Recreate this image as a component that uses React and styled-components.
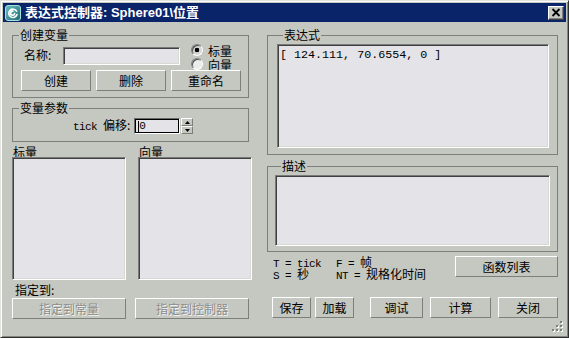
import React from 'react';
import styled, { createGlobalStyle } from 'styled-components';

const BG = '#c5c7c1';
const FIELD = '#e4e3e7';
const CJK = '"Noto Sans CJK SC", "Liberation Sans", sans-serif';

const Global = createGlobalStyle`
  html, body { margin: 0; padding: 0; background: ${BG}; }
  body { font-family: ${CJK}; font-size: 12px; color: #000; }
  * { box-sizing: border-box; }
`;

const Window = styled.div`
  position: relative;
  width: 569px;
  height: 338px;
  background: ${BG};
  border: 1px solid;
  border-color: #e2e3df #303030 #303030 #e2e3df;
  box-shadow: inset 1px 1px #ffffff, inset -1px -1px #85877f;
  padding: 2px;
  display: flex;
  flex-direction: column;
`;

const TitleBar = styled.div`
  height: 19px;
  background: #0a246a;
  display: flex;
  align-items: center;
  padding: 0 2px;
`;

const Title = styled.div`
  margin-left: 4px;
  flex: 1;
  color: #fff;
  font-family: "Liberation Sans", "Noto Sans CJK SC", sans-serif;
  font-weight: bold;
  font-size: 13px;
  line-height: 19px;
  white-space: nowrap;
`;

const CloseBtn = styled.div`
  width: 16px;
  height: 14px;
  background: ${BG};
  border: 1px solid;
  border-color: #fff #404040 #404040 #fff;
  box-shadow: inset -1px -1px #808080;
  display: flex;
  align-items: center;
  justify-content: center;
`;

const Body = styled.div`
  flex: 1;
  display: flex;
  padding: 7px 8px 0 9px;
  gap: 15px;
`;

const Column = styled.div`
  width: ${(p) => p.$w}px;
  display: flex;
  flex-direction: column;
`;

const Group = styled.fieldset`
  margin: ${(p) => p.$mt || 0}px 0 0 0;
  width: ${(p) => p.$w}px;
  min-width: 0;
  border: 1px solid #7d7f7a;
  padding: ${(p) => p.$pt}px 0 ${(p) => p.$pb}px ${(p) => p.$pl || 0}px;
`;

const Legend = styled.legend`
  margin-left: 6px;
  padding: 0 1px;
  font-size: 12px;
  line-height: 12px;
  height: 12px;
`;

const NameRow = styled.div`
  display: flex;
  align-items: flex-start;
  height: 27px;
  padding-left: 11px;
`;

const FieldLabel = styled.span`
  width: 39px;
  margin-top: 5px;
  line-height: 14px;
`;

const Sunken = styled.div`
  width: ${(p) => p.$w}px;
  height: ${(p) => p.$h}px;
  margin-top: ${(p) => p.$mt || 0}px;
  background: ${FIELD};
  border: 1px solid;
  border-color: #7a7a7a #ffffff #ffffff #7a7a7a;
  box-shadow: inset 1px 1px #404040, inset -1px -1px #d8d9d4;
`;

const RadioList = styled.div`
  margin-left: 11px;
  display: flex;
  flex-direction: column;
`;

const RadioItem = styled.label`
  display: flex;
  align-items: center;
  gap: 5px;
  height: 14px;
`;

const RadioText = styled.span`
  display: block;
  height: 13px;
  line-height: 13px;
  font-size: 12px;
`;

const Radio = styled.span`
  width: 12px;
  height: 12px;
  border-radius: 50%;
  border: 1px solid;
  border-color: #808080 #ffffff #ffffff #808080;
  background: ${(p) =>
    p.$checked
      ? 'radial-gradient(circle at center, #000 0 2px, #d6d6d6 2.6px)'
      : '#ececec'};
  box-shadow: inset 1px 1px #505050;
`;

const BtnRow = styled.div`
  display: flex;
  gap: ${(p) => p.$gap || 0}px;
  padding-left: ${(p) => p.$pl || 0}px;
  margin-top: ${(p) => p.$mt || 0}px;
`;

const Btn = styled.div`
  width: ${(p) => p.$w}px;
  height: 21px;
  margin-left: ${(p) => p.$ml || 0}px;
  background: ${BG};
  border: 1px solid;
  border-color: #ffffff #7d7f7a #7d7f7a #ffffff;
  display: flex;
  align-items: center;
  justify-content: center;
  font-size: 12px;
  line-height: 12px;
  color: ${(p) => (p.$disabled ? '#8c8e89' : '#000')};
  text-shadow: ${(p) => (p.$disabled ? '1px 1px 0 #f2f2f2' : 'none')};
`;

const TickRow = styled.div`
  display: flex;
  align-items: center;
  padding-left: 60px;
  height: 16px;
`;

const Mono = styled.span`
  font-family: "Liberation Mono", monospace;
  font-size: 11px;
  letter-spacing: -0.6px;
`;

const TickLabel = styled.span`
  margin-right: 4px;
  line-height: 14px;
  white-space: pre;
`;

const SpinInput = styled.div`
  width: 46px;
  height: 16px;
  background: ${FIELD};
  border: 1px solid;
  border-color: #6a6a6a #ffffff #ffffff #6a6a6a;
  box-shadow: inset 1px 1px #000, inset -1px -1px #000;
  padding-left: 3px;
  display: flex;
  align-items: center;
  font-family: "Liberation Mono", monospace;
  font-size: 11px;
  line-height: 12px;
`;

const Caret = styled.span`
  width: 1px;
  height: 11px;
  background: #000;
`;

const Spinner = styled.div`
  margin-left: 1px;
  width: 12px;
  height: 16px;
  display: flex;
  flex-direction: column;
`;

const SpinHalf = styled.div`
  flex: 1;
  background: ${BG};
  border: 1px solid;
  border-color: #ffffff #7d7f7a #7d7f7a #ffffff;
  display: flex;
  align-items: center;
  justify-content: center;
`;

const ListsRow = styled.div`
  display: grid;
  grid-template-columns: 114px 114px;
  column-gap: 12px;
  margin-top: 4px;
`;

const ListCol = styled.div`
  display: flex;
  flex-direction: column;
`;

const SmallLabel = styled.div`
  line-height: 11px;
  height: 11px;
  padding-left: ${(p) => p.$pl || 1}px;
  margin-top: ${(p) => p.$mt || 0}px;
`;

const ExprText = styled.div`
  font-family: "Liberation Mono", monospace;
  font-size: 11.7px;
  line-height: 12px;
  padding: 4px 0 0 2px;
  white-space: pre;
`;

const HintRow = styled.div`
  display: flex;
  justify-content: space-between;
  align-items: flex-start;
  margin-top: 4px;
  height: 24px;
`;

const HintGrid = styled.div`
  display: grid;
  grid-template-columns: 63px auto;
  line-height: 12px;
  padding-left: 6px;
  white-space: pre;
`;

const HintCell = styled.span`
  display: block;
  height: 12px;
  line-height: 12px;
`;

const Grip = styled.svg`
  position: absolute;
  right: 4px;
  bottom: 4px;
`;

const AppIcon = () => (
  <svg width="16" height="16" viewBox="0 0 16 16">
    <defs>
      <linearGradient id="ig" x1="0" y1="0" x2="1" y2="1">
        <stop offset="0" stopColor="#6cc3c3" />
        <stop offset="1" stopColor="#1d6a72" />
      </linearGradient>
    </defs>
    <rect x="0.5" y="0.5" width="15" height="15" rx="2.5" fill="url(#ig)" stroke="#a8e0dc" strokeWidth="1" />
    <path
      d="M11.6 6.2 A4.2 4.2 0 1 0 12 9.6 M9.6 8.6 A2 2 0 1 1 8 6.2"
      fill="none"
      stroke="#ffffff"
      strokeWidth="1.6"
      strokeLinecap="round"
    />
  </svg>
);

const CloseIcon = () => (
  <svg width="10" height="9" viewBox="0 0 10 9">
    <path d="M1.5 1 L8.5 8 M8.5 1 L1.5 8" stroke="#000" strokeWidth="1.8" />
  </svg>
);

const Arrow = ({ up }) => (
  <svg width="5" height="3" viewBox="0 0 5 3">
    <path d={up ? 'M0 3 L2.5 0 L5 3 Z' : 'M0 0 L2.5 3 L5 0 Z'} fill="#000" />
  </svg>
);

export default function App() {
  const dots = [
    [8, 0],
    [4, 4],
    [8, 4],
    [0, 8],
    [4, 8],
    [8, 8],
  ];
  return (
    <>
      <Global />
      <Window>
        <TitleBar>
          <AppIcon />
          <Title>表达式控制器: Sphere01\位置</Title>
          <CloseBtn>
            <CloseIcon />
          </CloseBtn>
        </TitleBar>
        <Body>
          <Column $w={240}>
            <Group $w={237} $pt={2} $pb={6}>
              <Legend>创建变量</Legend>
              <NameRow>
                <FieldLabel>名称:</FieldLabel>
                <Sunken $w={117} $h={18} $mt={4} />
                <RadioList>
                  <RadioItem>
                    <Radio $checked />
                    <RadioText>标量</RadioText>
                  </RadioItem>
                  <RadioItem>
                    <Radio />
                    <RadioText>向量</RadioText>
                  </RadioItem>
                </RadioList>
              </NameRow>
              <BtnRow $pl={8} $gap={5}>
                <Btn $w={70}>创建</Btn>
                <Btn $w={70}>删除</Btn>
                <Btn $w={70}>重命名</Btn>
              </BtnRow>
            </Group>
            <Group $w={237} $pt={4} $pb={7} $mt={4}>
              <Legend>变量参数</Legend>
              <TickRow>
                <TickLabel>
                  <Mono>tick </Mono>偏移:
                </TickLabel>
                <SpinInput>
                  <Caret />0
                </SpinInput>
                <Spinner>
                  <SpinHalf>
                    <Arrow up />
                  </SpinHalf>
                  <SpinHalf>
                    <Arrow />
                  </SpinHalf>
                </Spinner>
              </TickRow>
            </Group>
            <ListsRow>
              <ListCol>
                <SmallLabel>标量</SmallLabel>
                <Sunken $w={114} $h={123} />
              </ListCol>
              <ListCol>
                <SmallLabel>向量</SmallLabel>
                <Sunken $w={114} $h={123} />
              </ListCol>
            </ListsRow>
            <SmallLabel $pl={3} $mt={4}>指定到:</SmallLabel>
            <BtnRow $gap={9} $mt={3}>
              <Btn $w={114} $disabled>指定到常量</Btn>
              <Btn $w={114} $disabled>指定到控制器</Btn>
            </BtnRow>
          </Column>
          <Column $w={291}>
            <Group $w={291} $pt={3} $pb={6} $pl={9}>
              <Legend>表达式</Legend>
              <Sunken $w={272} $h={104}>
                <ExprText>[ 124.111, 70.6554, 0 ]</ExprText>
              </Sunken>
            </Group>
            <Group $w={291} $pt={3} $pb={5} $pl={7} $mt={5}>
              <Legend>描述</Legend>
              <Sunken $w={275} $h={71} />
            </Group>
            <HintRow>
              <HintGrid>
                <HintCell>
                  <Mono>T = tick</Mono>
                </HintCell>
                <HintCell>
                  <Mono>F = </Mono>帧
                </HintCell>
                <HintCell>
                  <Mono>S = </Mono>秒
                </HintCell>
                <HintCell>
                  <Mono>NT = </Mono>规格化时间
                </HintCell>
              </HintGrid>
              <Btn $w={103}>函数列表</Btn>
            </HintRow>
            <BtnRow $mt={17}>
              <Btn $w={39} $ml={5}>保存</Btn>
              <Btn $w={39} $ml={4}>加载</Btn>
              <Btn $w={53} $ml={16}>调试</Btn>
              <Btn $w={61} $ml={7}>计算</Btn>
              <Btn $w={60} $ml={7}>关闭</Btn>
            </BtnRow>
          </Column>
        </Body>
        <Grip width="12" height="12" viewBox="0 0 12 12">
          {dots.map(([x, y]) => (
            <g key={`${x}-${y}`}>
              <rect x={x + 1} y={y + 1} width="2" height="2" fill="#ffffff" />
              <rect x={x} y={y} width="2" height="2" fill="#7d7f7a" />
            </g>
          ))}
        </Grip>
      </Window>
    </>
  );
}
